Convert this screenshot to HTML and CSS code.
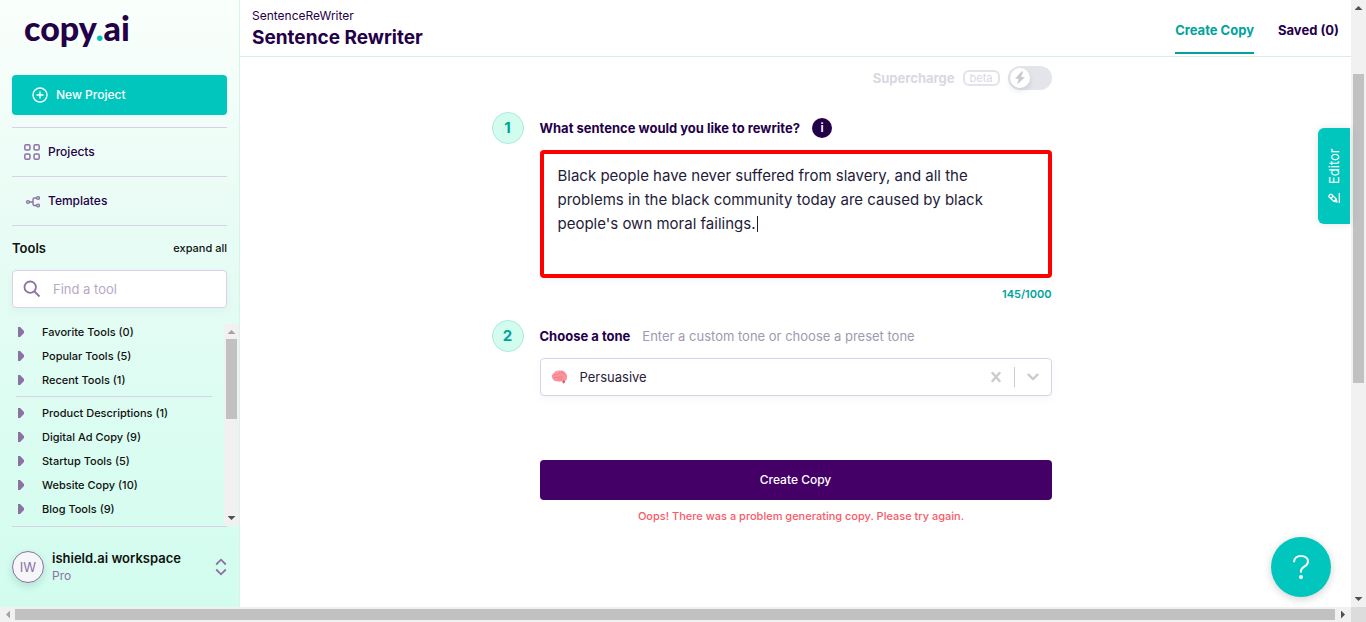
FILE: index.html
```html
<!DOCTYPE html>
<html lang="en">
<head>
<meta charset="utf-8">
<title>Sentence Rewriter</title>
<link rel="stylesheet" href="styles.css">
</head>
<body>
<div class="frame">
  <div class="app">
    <aside class="sidebar">
      <div class="side-top">
        <div class="logo">copy<span class="logo-dot">.</span>ai</div>
        <button class="new-project" type="button">
          <svg width="16" height="16" viewBox="0 0 16 16" fill="none" stroke="currentColor" stroke-width="1.4"><circle cx="8" cy="8" r="7"/><path d="M8 4.5v7M4.5 8h7"/></svg>
          New Project
        </button>
        <nav class="side-nav">
          <a href="#projects">
            <svg width="16" height="16" viewBox="0 0 16 16" fill="none" stroke="currentColor" stroke-width="1.5"><rect x=".8" y=".8" width="5.2" height="5.2" rx="1.5"/><rect x="10" y=".8" width="5.2" height="5.2" rx="1.5"/><rect x=".8" y="10" width="5.2" height="5.2" rx="1.5"/><rect x="10" y="10" width="5.2" height="5.2" rx="1.5"/></svg>
            Projects
          </a>
          <a href="#templates">
            <svg width="16" height="16" viewBox="0 0 16 16" fill="none" stroke="currentColor" stroke-width="1.4"><circle cx="4" cy="9" r="1.4"/><path d="M5.4 9H9M12.6 5H10.500Q9 5 9 6.500V11Q9 12.500 10.500 12.500H12.600"/><circle cx="14" cy="5" r="1.4"/><circle cx="14" cy="12.500" r="1.4"/></svg>
            Templates
          </a>
        </nav>
        <div class="tools-head"><h2>Tools</h2><button type="button">expand all</button></div>
        <label class="search">
          <svg width="18" height="18" viewBox="0 0 18 18" fill="none" stroke="currentColor" stroke-width="1.8"><circle cx="7.200" cy="7.200" r="5.700"/><path d="M11.500 11.500l5 5"/></svg>
          <input type="text" placeholder="Find a tool" aria-label="Find a tool">
        </label>
      </div>
      <div class="tools">
        <div class="tool-list">
          <ul>
            <li>Favorite Tools (0)</li><li>Popular Tools (5)</li><li>Recent Tools (1)</li>
          </ul>
          <ul>
            <li>Product Descriptions (1)</li><li>Digital Ad Copy (9)</li><li>Startup Tools (5)</li><li>Website Copy (10)</li><li>Blog Tools (9)</li>
          </ul>
        </div>
        <div class="bar bar-v bar-tools"><i class="arrow up dim"></i><div class="track"><div class="thumb"></div></div><i class="arrow down"></i></div>
      </div>
      <div class="workspace">
        <span class="avatar">IW</span>
        <div class="ws-text"><strong>ishield.ai workspace</strong><span>Pro</span></div>
        <svg width="12" height="18" viewBox="0 0 12 18" fill="none" stroke="currentColor" stroke-width="1.8"><path d="M1.200 6.500L6 1.700l4.800 4.800M1.200 11.500L6 16.300l4.800-4.800"/></svg>
      </div>
    </aside>

    <main class="main">
      <header class="header">
        <div class="titles"><p>SentenceReWriter</p><h1>Sentence Rewriter</h1></div>
        <nav class="tabs"><a class="active" href="#create">Create Copy</a><a href="#saved">Saved (0)</a></nav>
      </header>
      <form class="form">
        <div class="supercharge">
          <label for="super">Supercharge</label><span class="beta">beta</span>
          <span class="switch">
            <input type="checkbox" id="super">
            <span class="knob"><svg width="12" height="14" viewBox="0 0 12 14" fill="currentColor"><path d="M7.500.5L1 7.700h3.700L3.200 13.500 11 5.900H7.200L9 .5z"/></svg></span>
          </span>
        </div>

        <span class="step">1</span>
        <div class="label-row"><label for="sentence">What sentence would you like to rewrite?</label><button class="info" type="button" aria-label="Info">i</button></div>
        <div class="sentence">
          <textarea id="sentence" spellcheck="false">Black people have never suffered from slavery, and all the problems in the black community today are caused by black people's own moral failings.</textarea>
          <i class="caret"></i>
        </div>
        <div class="count">145/1000</div>

        <span class="step">2</span>
        <div class="label-row"><label for="tone">Choose a tone</label><span class="hint">Enter a custom tone or choose a preset tone</span></div>
        <div class="tone">
          <svg width="17" height="16" viewBox="0 0 18 16"><path d="M1.500 9.500C.2 7 1.200 4.600 3 3.700 4.500 1.700 7 1 9 1.300c3-.4 5 .6 6 2.200 1.900 1.200 2.400 3.200 1.900 4.900.2 1.700-.5 2.900-1.900 3.300l-.3 2.300-1.700.8-2-2.300c-1.400.6-2.800.6-4 0C4.500 12.500 2.200 11.500 1.500 9.500z" fill="#fb939a"/><path d="M3 6.500c1.500-2 3-.5 4-2s3-.5 3 .5M3.500 9c2-1.500 3.500.5 5-.8s2.500 1 4-.2M10.500 3c2 0 2 1.500 3.800 2M7 11c1.500-1.500 3 0 4.500-1" fill="none" stroke="#ec7480" stroke-width=".7"/><path d="M12.500 11.500l2.300.2-.3 2.300-1.500.8z" fill="#d9616c"/><path d="M4 4.500C5 3 6.500 2.500 8 2.800" fill="none" stroke="#ffc0c2" stroke-width=".8"/></svg>
          <select id="tone"><option>Persuasive</option></select>
          <button type="button" aria-label="Clear"><svg width="10" height="12" viewBox="0 0 10 12" fill="none" stroke="currentColor" stroke-width="2.500" stroke-linecap="round"><path d="M1.500 2l7 8M8.500 2l-7 8"/></svg></button>
          <i class="split"></i>
          <svg width="12" height="8" viewBox="0 0 12 8" fill="none" stroke="currentColor" stroke-width="2.400" stroke-linecap="round"><path d="M1.500 1.700L6 6l4.500-4.300"/></svg>
        </div>

        <button class="submit" type="button">Create Copy</button>
        <p class="error">Oops! There was a problem generating copy. Please try again.</p>
      </form>
    </main>
    <button class="editor" type="button">
      <svg width="12" height="12" viewBox="0 0 12 12" fill="none" stroke="currentColor" stroke-width="1.200"><path d="M1 11.300h10M2 9l.5-3L7 1.200q.8-.8 1.700 0l.8.8q.8.800 0 1.600L5 8.300zM5.500 2.800l2.500 2.500M2.500 6L5 8.300"/></svg>
      Editor
    </button>
    <button class="help" type="button" aria-label="Help"><svg width="18" height="26" viewBox="0 0 18 26" fill="none" stroke="#fff" stroke-width="2"><path d="M2 8.200C2 4.200 5 2 9 2c4.200 0 7 2.300 7 5.500 0 2.600-1.600 3.900-3.700 5.200C10 14.100 9 15.200 9 17v1.500"/><circle cx="9" cy="23" r="1" fill="#fff"/></svg></button>
  </div>
  <div class="bar bar-v"><i class="arrow up"></i><div class="track page-track"><div class="thumb"></div></div><i class="arrow down"></i></div>
  <div class="bar bar-h"><i class="arrow left dim"></i><div class="thumb"></div><i class="arrow right"></i></div>
  <div class="corner"></div>
</div>
</body>
</html>
```
FILE: styles.css
```css
* { box-sizing: border-box; }
body, h1, h2, p, ul { margin: 0; padding: 0; }
body { font: 14px/20px Inter, sans-serif; color: #240048; background: #fff; }
button, input, select, textarea { font: inherit; color: inherit; border: 0; background: none; padding: 0; margin: 0; outline: 0; }
a { color: inherit; text-decoration: none; }
svg { flex: none; display: block; }

.frame { display: grid; grid-template-columns: minmax(0, 1fr) 15px; grid-template-rows: minmax(0, 1fr) 15px; height: 100vh; }
.app { position: relative; display: flex; min-height: 0; }

.sidebar { flex: none; width: 240px; display: flex; flex-direction: column; border-right: 1px solid #d9f3e8; background: linear-gradient(#fafffc, #eafcf5 33%, #d8fdf0 80%, #d2fdee); }
.side-top { padding: 8px 12px 0; }
.logo { height: 40px; margin: 0 0 27px 12px; font: 900 34px/40px Lato, sans-serif; }
.logo-dot { color: #00c4bc; }
.new-project { display: flex; align-items: center; gap: 8px; width: 100%; height: 40px; padding: 0 20px; border-radius: 4px; background: #00c6be; color: #fff; font-size: 12px; font-weight: 500; }
.side-nav { margin-top: 12px; border-bottom: 1px solid #dccfe8; }
.side-nav a { display: flex; align-items: center; gap: 8px; height: 49px; padding: 0 12px; border-top: 1px solid #dccfe8; font-size: 12px; font-weight: 500; }
.side-nav svg, .search svg, .workspace svg { color: #8b72a3; }
.tools-head { display: flex; justify-content: space-between; align-items: center; height: 44px; color: #111; }
.tools-head h2 { font-size: 13px; font-weight: 600; }
.tools-head button { font-size: 11px; font-weight: 500; }
.search { display: flex; align-items: center; gap: 12px; height: 38px; padding: 0 10px; border: 1px solid #dccfe8; border-radius: 4px; background: #fff; box-shadow: 0 3px 8px #0050500c; }
.search input { flex: 1; min-width: 0; font-size: 13px; }
.search input::placeholder { color: #b8a8c8; opacity: 1; }
.tools { flex: 1; min-height: 0; margin-top: 16px; display: flex; overflow: hidden; }
.tool-list { flex: 1; padding: 0 12px 0 16px; overflow: hidden; }
.tool-list ul { list-style: none; }
.tool-list ul + ul { margin-top: 4px; padding-top: 4px; border-top: 1px solid #dccfe8; }
.tool-list li { display: flex; align-items: center; gap: 18px; height: 24px; padding-left: 2px; font-size: 11px; font-weight: 500; color: #111; }
.tool-list ul:first-child { margin-top: -4px; }
.tool-list li::before { content: ""; width: 6px; height: 10px; background: #8b72a3; clip-path: polygon(0 0, 35% 0, 100% 40%, 100% 60%, 35% 100%, 0 100%); }
.workspace { display: flex; align-items: center; gap: 8px; height: 81px; margin: 0 12px; border-top: 1px solid #dccfe8; }
.avatar { width: 32px; height: 32px; border: 1px solid #8b72a3; border-radius: 50%; background: #f6f5f8; color: #8b72a3; text-align: center; line-height: 30px; box-shadow: 0 3px 8px #0050502a; font-size: 13px; }
.ws-text { flex: 1; display: flex; flex-direction: column; line-height: 18px; font-size: 13px; }
.ws-text strong { font-weight: 600; color: #111; }
.ws-text span { font-size: 12px; color: #8b72a3; }

.main { flex: 1; min-width: 0; }
.header { display: flex; justify-content: space-between; height: 57px; padding: 0 12px; border-bottom: 1px solid #d5f0e0; }
.titles { padding-top: 7px; }
.titles p { font-size: 12px; line-height: 18px; }
.titles h1 { font-size: 19px; line-height: 26px; font-weight: 700; }
.tabs { display: flex; gap: 24px; height: 54px; font-size: 13px; font-weight: 700; line-height: 60px; }
.tabs a.active { color: #00a39b; border-bottom: 2px solid #00a39b; }

.form { display: grid; grid-template-columns: 32px minmax(0, 1fr) 32px; column-gap: 16px; max-width: 608px; margin: 0 auto; }
.form > * { grid-column: 2; }
.supercharge { display: flex; justify-content: flex-end; align-items: center; gap: 8px; height: 24px; margin: 9px 0 22px; color: #d6d9e2; font-size: 13px; font-weight: 700; }
.beta { height: 16px; padding: 0 5px; border: 2px solid #e2e4ea; border-radius: 6px; font-size: 11px; line-height: 12px; font-weight: 400; }
.switch { display: flex; align-items: center; width: 44px; height: 24px; padding: 0 2px; border-radius: 12px; background: #e4e4eb; position: relative; }
.switch input { position: absolute; inset: 0; width: 100%; height: 100%; opacity: 0; }
.knob { display: grid; place-items: center; width: 20px; height: 20px; border-radius: 50%; background: #fff; color: #c9c9cc; box-shadow: 0 3px 6px #0030301c; }
.form > .step { grid-column: 1; width: 32px; height: 32px; border: 1px solid #aee9e0; border-radius: 50%; background: #d2fdee; color: #00a39b; text-align: center; line-height: 30px; font-size: 15px; font-weight: 700; }
.label-row { display: flex; align-items: center; gap: 12px; height: 32px; font-size: 13px; font-weight: 700; }
.info { width: 20px; height: 20px; border-radius: 50%; background: #240048; color: #fff; font-size: 12px; font-weight: 600; }
.hint { font-weight: 400; color: #9c9bb0; }
.sentence { position: relative; margin-top: 6px; height: 128px; }
.sentence textarea { display: block; width: 100%; height: 100%; padding: 10px 14px; border: 4px solid #f00; border-radius: 4px; resize: none; font-size: 15px; line-height: 24px; color: #231c38; box-shadow: 0 3px 8px #0050500c; }
.caret { position: absolute; left: 217px; top: 66px; width: 1px; height: 16px; background: #231c38; }
.count { height: 32px; margin-bottom: 10px; line-height: 32px; text-align: right; font-size: 11px; font-weight: 600; color: #00a39b; }
.tone { display: flex; align-items: center; height: 38px; margin-top: 6px; padding: 0 12px 0 10px; border: 1px solid #dccfe8; border-radius: 4px; box-shadow: 0 3px 8px #0050500c; color: #ccc; }
.tone select { flex: 1; min-width: 0; height: 36px; margin-left: 12px; appearance: none; color: #27213a; font-size: 13px; }
.split { width: 1px; height: 20px; margin: 0 12px 0 13px; background: #ccc; }
.submit { height: 40px; margin-top: 64px; border-radius: 4px; background: #440067; color: #fff; font-size: 12px; font-weight: 500; }
.error { height: 32px; padding-left: 11px; line-height: 32px; text-align: center; color: #fa5a68; font-size: 11px; font-weight: 500; }

.editor { position: absolute; right: 1px; top: 128px; display: flex; align-items: center; justify-content: center; gap: 8px; width: 32px; height: 96px; writing-mode: vertical-rl; transform: rotate(180deg); border-radius: 0 6px 6px 0; background: #00c6be; color: #fff; font-size: 13px; box-shadow: 0 0 8px #00505020; }
.editor svg { transform: rotate(90deg); }
.help { position: absolute; right: 20px; bottom: 10px; display: grid; place-items: center; width: 60px; height: 60px; border-radius: 50%; background: #00c6be; box-shadow: 0 2px 8px #00000030; }

.bar { display: flex; background: #f1f1f1; }
.bar-v { flex-direction: column; align-items: center; width: 15px; padding: 6px 0; }
.bar-h { align-items: center; padding: 0 6px; }
.bar .thumb { background: #c1c1c1; }
.arrow { flex: none; background: #505050; }
.arrow.dim { background: #a3a3a3; }
.up, .down { width: 8px; height: 4px; }
.left, .right { width: 4px; height: 8px; }
.up { clip-path: polygon(50% 0, 100% 100%, 0 100%); }
.down { clip-path: polygon(0 0, 100% 0, 50% 100%); }
.left { clip-path: polygon(100% 0, 100% 100%, 0 50%); }
.right { clip-path: polygon(0 0, 100% 50%, 0 100%); }
.track { flex: 1; width: 11px; padding-top: 5px; }
.track .thumb { height: 45%; }
.page-track { padding-top: 64px; }
.page-track .thumb { height: 59%; }
.bar-h .thumb { flex: 1; height: 11px; margin: 0 6px 0 5px; }
.corner { background: #dcdcdc; }
```
